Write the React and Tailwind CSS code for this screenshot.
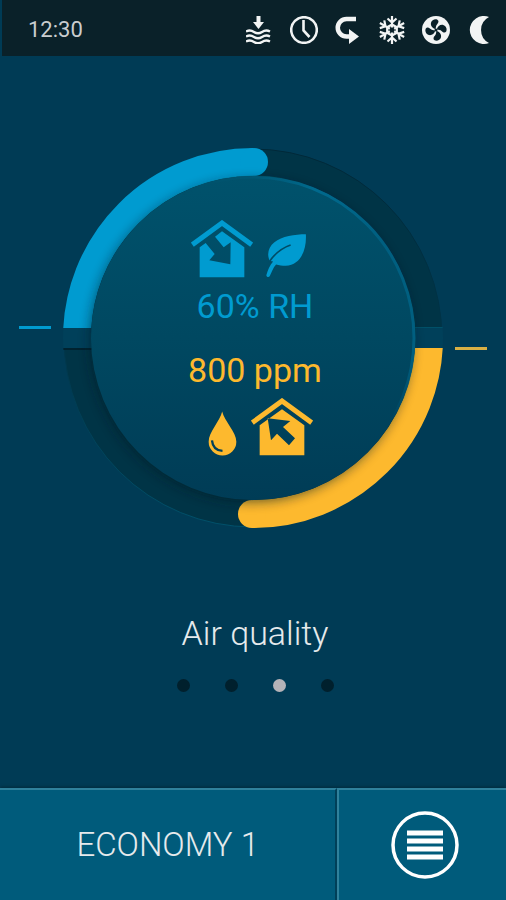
import React, { useState } from "react";

const PAGES = ["Temperature", "Ventilation", "Air quality", "Energy"];

const BLUE = "#009bd0";
const YELLOW = "#fdb92e";

function IntakeIcon() {
  return (
    <svg viewBox="0 0 28 28" className="size-7" fill="none" stroke="#f2f4f4" aria-label="Intake">
      <path d="M12.500 0v7" strokeWidth="4" />
      <path d="M7 6h11l-5.500 7z" fill="#f2f4f4" stroke="none" />
      <g strokeWidth="2.400">
        <path d="M0 15.500c3-1.500 5-1.500 8 .5s5 2 8 0 5-2 8-.5" />
        <path d="M0 20.500c3-1.500 5-1.500 8 .5s5 2 8 0 5-2 8-.5" />
        <path d="M0 25.500c3-1.500 5-1.500 8 .5s5 2 8 0 5-2 8-.5" />
      </g>
    </svg>
  );
}

function ClockIcon() {
  return (
    <svg viewBox="0 0 28 28" className="size-7" fill="none" stroke="#f2f4f4" aria-label="Timer">
      <circle cx="14" cy="14" r="12.800" strokeWidth="2.600" />
      <path d="M13.500 4v10.500l6 6.500" strokeWidth="2.600" />
    </svg>
  );
}

function ReturnIcon() {
  return (
    <svg viewBox="0 0 28 28" className="size-7" fill="none" stroke="#f2f4f4" aria-label="Recirculation">
      <path d="M22 3H12.500a8.700 8.700 0 0 0 0 17.500H17" strokeWidth="4.500" />
      <path d="M15 13v15l10-7.500z" fill="#f2f4f4" stroke="none" />
    </svg>
  );
}

function SnowIcon() {
  return (
    <svg viewBox="0 0 28 28" className="size-7" fill="none" stroke="#f2f4f4" strokeWidth="2.200" aria-label="Cooling">
      {[0, 60, 120, 180, 240, 300].map((a) => (
        <path key={a} d="M14 11.500V0M9.500 2.500l4.500 4 4.500-4" transform={`rotate(${a} 14 14)`} />
      ))}
      <path d="M14 8.500l4.800 2.700v5.600L14 19.500l-4.800-2.700v-5.600z" />
    </svg>
  );
}

function FanIcon() {
  return (
    <svg viewBox="0 0 28 28" className="size-7" aria-label="Fan">
      <circle cx="14" cy="14" r="14" fill="#f2f4f4" />
      {[0, 90, 180, 270].map((a) => (
        <path
          key={a}
          d="M13.600 13.300C10.500 12.300 8.300 9.800 9 6.800c.7-2.800 4.200-4.200 6.400-3 1.900 1.200 1 3.100-.2 4.400-1.300 1.400-1.300 3-1.600 5.100z"
          fill="#0a2129"
          transform={`rotate(${a} 14 14)`}
        />
      ))}
      <circle cx="14" cy="14" r="1.500" fill="#0a2129" />
    </svg>
  );
}

function MoonIcon() {
  return (
    <svg viewBox="0 0 28 28" className="size-7" aria-label="Night mode">
      <path d="M23 1A14 14 0 1 0 23 27A14.600 14.600 0 0 1 23 1z" fill="#f2f4f4" />
    </svg>
  );
}

function HouseIcon({ color, inward }) {
  return (
    <svg viewBox="0 0 186 174" className="w-[62px] h-[58px]" aria-hidden="true">
      <path d="M4 74L93 9l89 65" fill="none" stroke={color} strokeWidth="15" />
      {inward ? (
        <path
          d="M26 172V82L44 69L71 102L55 121L118 133L119 67L98 82L72 50L93 34L160 82V172z"
          fill={color}
        />
      ) : (
        <path
          fillRule="evenodd"
          d="M26 172V82L93 34L160 82V172zM50 61L118 69L96 87L132 121L114 142L78 107L60 127z"
          fill={color}
        />
      )}
    </svg>
  );
}

function LeafIcon() {
  return (
    <svg viewBox="0 0 126 136" className="w-[42px] h-[45px]" aria-hidden="true">
      <path
        d="M123 4C126 48 108 98 62 99C52 99 42 98 33 95C24 104 20 118 14 130C11 136 2 133 4 126C8 112 14 98 24 86L14 84C4 64 10 42 28 28C50 10 90 4 123 4z"
        fill={BLUE}
      />
      <path d="M12 88C26 66 48 46 77 36" fill="none" stroke="#004c66" strokeWidth="5" />
    </svg>
  );
}

function DropIcon() {
  return (
    <svg viewBox="0 0 88 134" className="w-[29px] h-[45px]" aria-hidden="true">
      <path d="M43 0C50 30 86 62 86 92A42 42 0 0 1 2 92C2 62 36 30 43 0z" fill={YELLOW} />
      <path d="M12 88C14 108 26 119 44 120" fill="none" stroke="#00405a" strokeWidth="7" />
    </svg>
  );
}

function Gauge() {
  return (
    <svg viewBox="0 0 468 380" className="w-[468px] h-[380px] [grid-area:1/1]" role="img" aria-label="Air quality gauge">
      <defs>
        <linearGradient id="disc" x1="0" y1="0" x2="0" y2="1">
          <stop offset="0" stopColor="#00526c" />
          <stop offset="0.500" stopColor="#004861" />
          <stop offset="1" stopColor="#003c56" />
        </linearGradient>
        <linearGradient id="rim" x1="0.200" y1="0.300" x2="0.800" y2="0.500">
          <stop offset="0" stopColor="#00526c" stopOpacity="0" />
          <stop offset="0.600" stopColor="#006a8e" />
          <stop offset="1" stopColor="#005f80" />
        </linearGradient>
        <linearGradient id="rimFade" x1="0" y1="0" x2="0" y2="1">
          <stop offset="0.550" stopColor="#fff" />
          <stop offset="0.750" stopColor="#000" />
        </linearGradient>
        <mask id="rimMask">
          <rect x="60" y="20" width="350" height="340" fill="url(#rimFade)" />
        </mask>
        <linearGradient id="edge" x1="0" y1="0" x2="0" y2="1">
          <stop offset="0" stopColor="#002838" />
          <stop offset="0.500" stopColor="#003448" />
          <stop offset="1" stopColor="#00506a" />
        </linearGradient>
        <clipPath id="topLeft">
          <rect x="0" y="0" width="234" height="180" />
        </clipPath>
        <clipPath id="bottomRight">
          <rect x="234" y="200" width="234" height="180" />
        </clipPath>
        <clipPath id="ring">
          <circle cx="234" cy="190" r="190" />
        </clipPath>
        <filter id="blur" x="-20%" y="-20%" width="140%" height="140%">
          <feGaussianBlur stdDeviation="6" />
        </filter>
      </defs>

      {/* track */}
      <circle cx="234" cy="190" r="175" fill="none" stroke="#003446" strokeWidth="28" />
      <circle cx="234" cy="190" r="189" fill="none" stroke="url(#edge)" strokeWidth="1" />
      <g clipPath="url(#ring)">
        <rect x="44" y="180" width="380" height="20" fill="#00405a" />
        <rect x="44" y="200" width="190" height="2" fill="#00222f" />
        <rect x="234" y="179" width="190" height="1" fill="#005068" />
      </g>

      {/* values */}
      <g clipPath="url(#topLeft)">
        <circle cx="234" cy="190" r="176" fill="none" stroke={BLUE} strokeWidth="28" />
      </g>
      <circle cx="235" cy="14" r="14" fill={BLUE} />
      <g clipPath="url(#bottomRight)">
        <circle cx="234" cy="190" r="176" fill="none" stroke={YELLOW} strokeWidth="28" />
      </g>
      <circle cx="233" cy="366" r="14" fill={YELLOW} />

      {/* disc */}
      <g clipPath="url(#ring)">
        <circle cx="232" cy="193" r="161" fill="#001a26" opacity="0.600" filter="url(#blur)" />
      </g>
      <circle cx="234" cy="190" r="162" fill="url(#disc)" />
      <circle cx="234" cy="190" r="161" fill="none" stroke="url(#rim)" strokeWidth="3" mask="url(#rimMask)" />

      <rect x="0" y="178" width="32" height="3" fill={BLUE} />
      <rect x="436" y="199" width="32" height="3" fill="#d9b045" />
    </svg>
  );
}

function App() {
  const [page, setPage] = useState(2);

  return (
    <div className="min-h-screen flex flex-col bg-[#003b55] font-['Roboto',sans-serif] text-[#e6eaec]">
      <header className="h-14 flex items-center justify-between border-l-2 border-[#003b55] bg-[#0a2129] pl-[26px] pr-3 pt-1">
        <time className="text-[22px] leading-7 text-[#c9cdcf]">12:30</time>
        <div className="flex gap-4">
          <IntakeIcon />
          <ClockIcon />
          <ReturnIcon />
          <SnowIcon />
          <FanIcon />
          <MoonIcon />
        </div>
      </header>

      <main className="flex-1 flex flex-col items-center justify-center pb-1">
        <div className="grid place-items-center">
          <Gauge />
          <div className="[grid-area:1/1] flex flex-col items-center pl-1">
            <div className="flex items-end gap-3 pr-3">
              <HouseIcon color={BLUE} inward />
              <LeafIcon />
            </div>
            <p className="mt-2 text-[34px] leading-10 text-[#009bd0]">60% RH</p>
            <p className="mt-6 text-[34px] leading-10 text-[#fdb92e]">800 ppm</p>
            <div className="mt-2 flex items-end gap-[14px] pl-3">
              <DropIcon />
              <HouseIcon color={YELLOW} />
            </div>
          </div>
        </div>

        <h1 className="mt-[85px] pl-1 text-[34px] leading-10 font-light">Air quality</h1>
        <nav className="mt-[26px] pl-1 flex gap-[35px]">
          {PAGES.map((name, i) => (
            <button
              key={name}
              aria-label={name}
              onClick={() => setPage(i)}
              className={`size-[13px] rounded-full ${i === page ? "bg-[#b5b3b8]" : "bg-[#00202d]"}`}
            />
          ))}
        </nav>
      </main>

      <footer className="h-28 grid grid-cols-[2fr_1fr] bg-[#005b7b] shadow-[0_-1px_3px_#002a3c]">
        <button className="border-t-2 border-r-2 border-t-[#2f819c] border-r-[#003f58] text-[33px] leading-10 font-light">
          ECONOMY 1
        </button>
        <button
          aria-label="Menu"
          className="border-t-2 border-l-2 border-[#2f819c] flex items-center justify-center pl-1"
        >
          <svg viewBox="0 0 68 68" className="size-[68px]" fill="none" stroke="#fff">
            <circle cx="34" cy="34" r="32" strokeWidth="3.500" />
            <path d="M16 22h36M16 30h36M16 38h36M16 46h36" strokeWidth="5" />
          </svg>
        </button>
      </footer>
    </div>
  );
}

export default App;
